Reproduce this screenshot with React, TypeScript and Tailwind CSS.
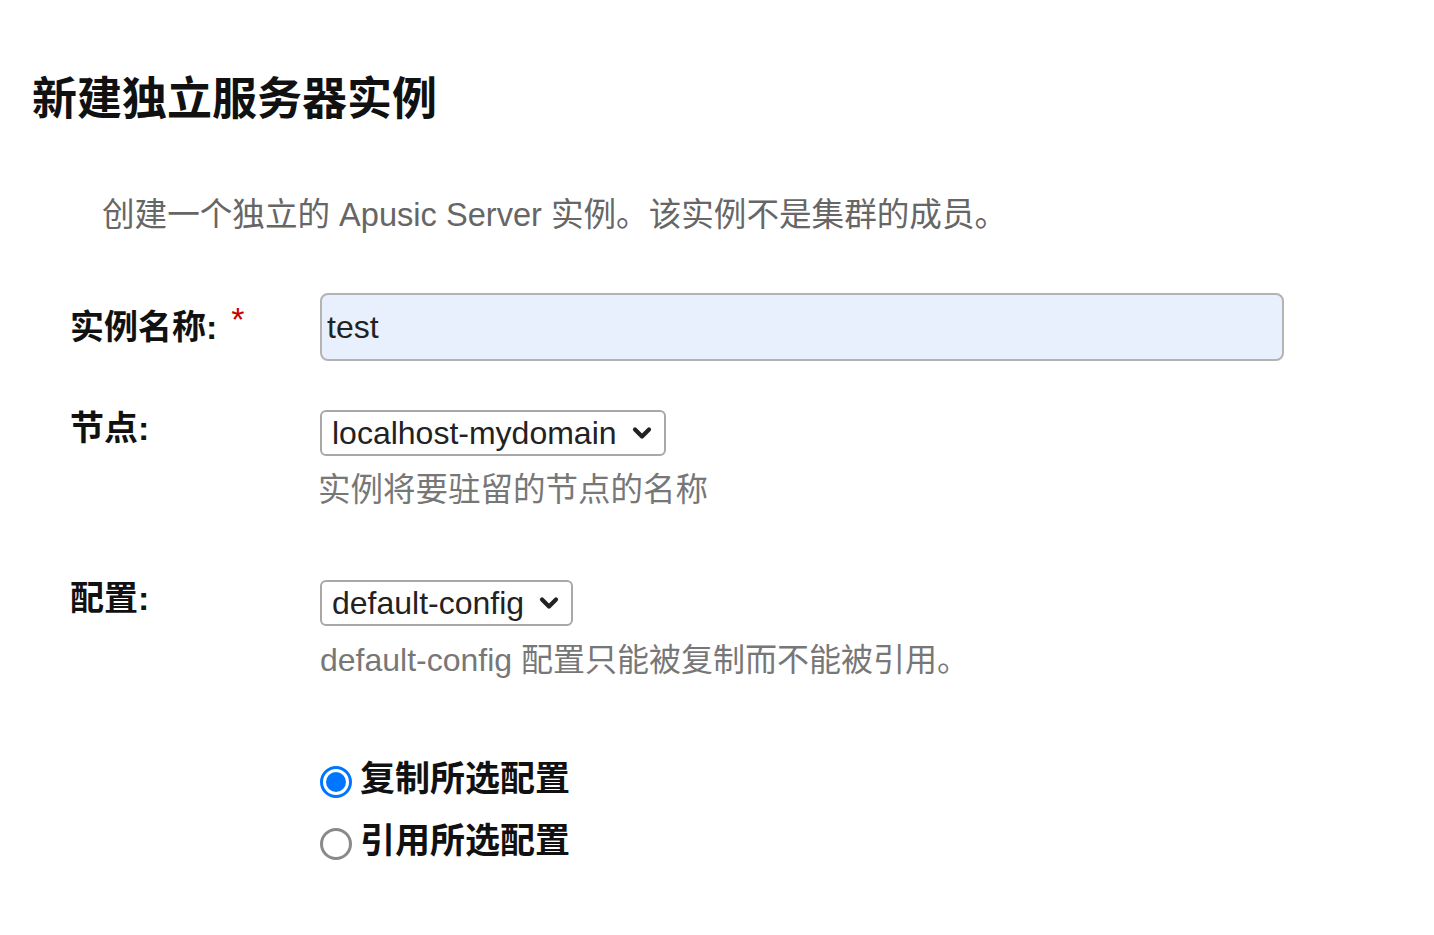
import React, { useState } from 'react';

const font = { fontFamily: '"Liberation Sans", "Noto Sans CJK SC", sans-serif' };

function Chevron() {
  return (
    <svg width="24" height="24" viewBox="0 0 24 24" fill="none" className="pointer-events-none absolute right-[12px] top-1/2 -translate-y-1/2">
      <path d="M5 8.5l7 7 7-7" stroke="#222" strokeWidth="4.2" strokeLinecap="round" strokeLinejoin="round" />
    </svg>
  );
}

export default function App() {
  const [name, setName] = useState('test');
  const [mode, setMode] = useState('copy');

  return (
    <div className="min-h-screen bg-white pl-[32px] pt-[72px] text-[#222]" style={font}>
      <h1 className="text-[45px] font-bold leading-[56px] text-[#111]">新建独立服务器实例</h1>

      <p className="mt-[65px] pl-[70px] text-[32.6px] leading-[44px] text-[#666]">
        创建一个独立的 Apusic Server 实例。该实例不是集群的成员。
      </p>

      <div className="mt-[56px] pl-[38px]">
        {/* 实例名称 */}
        <div className="grid grid-cols-[250px_1fr] items-start">
          <label className="mt-[12px] flex items-start text-[34px] font-bold leading-[44px] text-[#111]">
            实例名称:
            <span className="ml-[14px] -mt-[8px] text-[34px] font-normal leading-[44px] text-[#cc0000]">*</span>
          </label>
          <input
            value={name}
            onChange={e => setName(e.target.value)}
            className="h-[68px] w-[964px] rounded-[8px] border-2 border-[#b3b3b3] bg-[#e8f0fe] px-[5px] text-[32px] text-[#222] outline-none"
          />
        </div>

        {/* 节点 */}
        <div className="mt-[49px] grid grid-cols-[250px_1fr] items-start">
          <label className="-mt-[4px] text-[34px] font-bold leading-[44px] text-[#111]">节点:</label>
          <div>
            <div className="relative w-[346px]">
              <select className="h-[46px] w-full appearance-none rounded-[6px] border-2 border-[#a8a8a8] bg-white pl-[10px] text-[32px] leading-[40px] text-[#222] outline-none">
                <option>localhost-mydomain</option>
              </select>
              <Chevron />
            </div>
            <p className="mt-[12px] -ml-[2px] text-[32.5px] leading-[44px] text-[#777]">实例将要驻留的节点的名称</p>
          </div>
        </div>

        {/* 配置 */}
        <div className="mt-[68px] grid grid-cols-[250px_1fr] items-start">
          <label className="-mt-[4px] text-[34px] font-bold leading-[44px] text-[#111]">配置:</label>
          <div>
            <div className="relative w-[253px]">
              <select className="h-[46px] w-full appearance-none rounded-[6px] border-2 border-[#a8a8a8] bg-white pl-[10px] text-[32px] leading-[40px] text-[#222] outline-none">
                <option>default-config</option>
              </select>
              <Chevron />
            </div>
            <p className="mt-[12px] text-[32px] leading-[44px] text-[#777]">default-config 配置只能被复制而不能被引用。</p>

            <div className="mt-[75px] flex flex-col gap-[18px]">
              {[
                { key: 'copy', label: '复制所选配置' },
                { key: 'ref', label: '引用所选配置' },
              ].map(opt => (
                <label key={opt.key} className="flex h-[44px] cursor-pointer items-center gap-[8px]" onClick={() => setMode(opt.key)}>
                  {mode === opt.key ? (
                    <span className="mt-[6px] flex h-[32px] w-[32px] items-center justify-center rounded-full border-[3px] border-[#0075ff] bg-white">
                      <span className="h-[20px] w-[20px] rounded-full bg-[#0075ff]" />
                    </span>
                  ) : (
                    <span className="mt-[6px] h-[32px] w-[32px] rounded-full border-[3px] border-[#8a8a8a] bg-white" />
                  )}
                  <span className="text-[35px] font-bold leading-[44px] text-[#111]">{opt.label}</span>
                </label>
              ))}
            </div>
          </div>
        </div>
      </div>
    </div>
  );
}
